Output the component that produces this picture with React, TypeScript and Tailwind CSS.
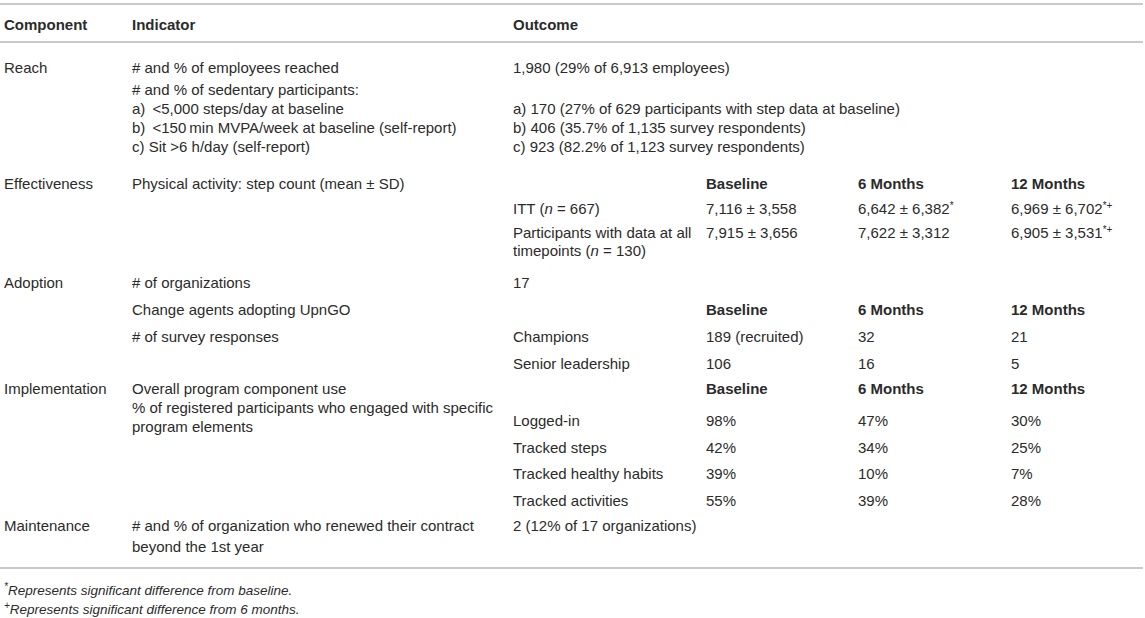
import React from "react";

const Sup = ({ children }: { children: React.ReactNode }) => (
  <sup className="text-[10px] relative -top-[5px] leading-none align-baseline">{children}</sup>
);

const N = () => <i>n</i>;

function SubRow({
  label,
  b,
  m6,
  m12,
  bold,
  cls = "h-[26.5px]",
}: {
  label?: React.ReactNode;
  b?: React.ReactNode;
  m6?: React.ReactNode;
  m12?: React.ReactNode;
  bold?: boolean;
  cls?: string;
}) {
  return (
    <div className={`flex items-center ${bold ? "font-bold" : ""} ${cls}`}>
      <div className="w-[193px] shrink-0">{label}</div>
      <div className="w-[152px] shrink-0">{b}</div>
      <div className="w-[153px] shrink-0">{m6}</div>
      <div className="flex-1">{m12}</div>
    </div>
  );
}

function HeadRow({ cls = "h-[26.5px]" }: { cls?: string }) {
  return <SubRow bold b="Baseline" m6="6 Months" m12="12 Months" cls={cls} />;
}

export default function App() {
  return (
    <div className="w-[1145px] h-[618px] bg-white text-[#2b2b2b] font-['Liberation_Sans',Arial,sans-serif] text-[15px] leading-[19px] pt-[3px]">
      <div className="w-[1143px] border-t-2 border-b-2 border-[#c9c9c9]">
        {/* header */}
        <div className="flex h-[38px] pt-[2px] items-center font-bold border-b-2 border-[#c9c9c9] pl-[4px]">
          <div className="w-[128px] shrink-0">Component</div>
          <div className="w-[381px] shrink-0">Indicator</div>
          <div className="flex-1">Outcome</div>
        </div>

        {/* Reach */}
        <div className="flex pl-[4px] pt-[15px] pb-[15px]">
          <div className="w-[128px] shrink-0">Reach</div>
          <div className="w-[381px] shrink-0">
            <div># and % of employees reached</div>
            <div className="mt-[2.5px]">
              <div># and % of sedentary participants:</div>
              <div>a)&nbsp;&thinsp;&lt;5,000 steps/day at baseline</div>
              <div>b)&nbsp;&thinsp;&lt;150&thinsp;min MVPA/week at baseline (self-report)</div>
              <div>c) Sit &gt;6 h/day (self-report)</div>
            </div>
          </div>
          <div className="flex-1">
            <div>1,980 (29% of 6,913 employees)</div>
            <div className="mt-[21.5px]">
              <div>a) 170 (27% of 629 participants with step data at baseline)</div>
              <div>b) 406 (35.7% of 1,135 survey respondents)</div>
              <div>c) 923 (82.2% of 1,123 survey respondents)</div>
            </div>
          </div>
        </div>

        {/* Effectiveness */}
        <div className="flex pl-[4px]">
          <div className="w-[128px] shrink-0 pt-[3px]">Effectiveness</div>
          <div className="w-[381px] shrink-0 pt-[3px]">Physical activity: step count (mean ± SD)</div>
          <div className="flex-1">
            <HeadRow cls="h-[25px]" />
            <SubRow
              cls="h-[25px]"
              label={
                <>
                  ITT (<N /> = 667)
                </>
              }
              b="7,116 ± 3,558"
              m6={
                <>
                  6,642 ± 6,382<Sup>*</Sup>
                </>
              }
              m12={
                <>
                  6,969 ± 6,702<Sup>*+</Sup>
                </>
              }
            />
            <div className="flex pt-[3px] pb-[3px] leading-[18.5px]">
              <div className="w-[193px] shrink-0">
                Participants with data at all
                <br />
                timepoints (<N /> = 130)
              </div>
              <div className="w-[152px] shrink-0">7,915 ± 3,656</div>
              <div className="w-[153px] shrink-0">7,622 ± 3,312</div>
              <div className="flex-1">
                6,905 ± 3,531<Sup>*+</Sup>
              </div>
            </div>
          </div>
        </div>

        {/* Adoption */}
        <div className="flex pl-[4px] pt-[6px]">
          <div className="w-[128px] shrink-0 h-[26.75px] flex items-center self-start">Adoption</div>
          <div className="w-[381px] shrink-0">
            <div className="h-[26.75px] flex items-center"># of organizations</div>
            <div className="h-[26.75px] flex items-center">Change agents adopting UpnGO</div>
            <div className="h-[26.75px] flex items-center"># of survey responses</div>
          </div>
          <div className="flex-1">
            <SubRow label="17" cls="h-[26.75px]" />
            <HeadRow cls="h-[26.75px]" />
            <SubRow label="Champions" b="189 (recruited)" m6="32" m12="21" cls="h-[26.75px]" />
            <SubRow label="Senior leadership" b="106" m6="16" m12="5" cls="h-[26.75px]" />
          </div>
        </div>

        {/* Implementation */}
        <div className="flex pl-[4px]">
          <div className="w-[128px] shrink-0 pt-[2px]">Implementation</div>
          <div className="w-[381px] shrink-0 pt-[2px]">
            <div>Overall program component use</div>
            <div>
              % of registered participants who engaged with specific
              <br />
              program elements
            </div>
          </div>
          <div className="flex-1">
            <HeadRow cls="h-[23px]" />
            <SubRow label="Logged-in" b="98%" m6="47%" m12="30%" cls="h-[26.5px] mt-[8px]" />
            <SubRow label="Tracked steps" b="42%" m6="34%" m12="25%" />
            <SubRow label="Tracked healthy habits" b="39%" m6="10%" m12="7%" />
            <SubRow label="Tracked activities" b="55%" m6="39%" m12="28%" />
          </div>
        </div>

        {/* Maintenance */}
        <div className="flex pl-[4px] pt-[1.5px] pb-[10px] leading-[21px]">
          <div className="w-[128px] shrink-0">Maintenance</div>
          <div className="w-[381px] shrink-0">
            # and % of organization who renewed their contract
            <br />
            beyond the 1st year
          </div>
          <div className="flex-1">2 (12% of 17 organizations)</div>
        </div>
      </div>

      {/* footnotes */}
      <div className="italic text-[13.5px] leading-[19px] pt-[11.5px] pl-[4px]">
        <div>
          <Sup>*</Sup>Represents significant difference from baseline.
        </div>
        <div>
          <Sup>+</Sup>Represents significant difference from 6 months.
        </div>
      </div>
    </div>
  );
}
